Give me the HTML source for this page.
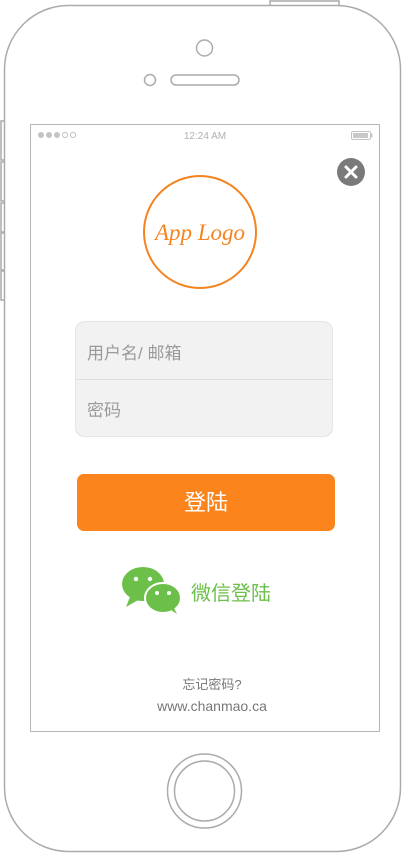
<!DOCTYPE html>
<html><head><meta charset="utf-8"><style>
html,body{margin:0;padding:0;width:405px;height:854px;background:#fff;overflow:hidden;font-family:"Liberation Sans","Noto Sans CJK SC",sans-serif}
.a{position:absolute}
</style></head><body>
<svg class="a" style="left:0;top:0" width="405" height="854">
<g fill="none" stroke="#a9acac" stroke-width="1.5">
<path d="M270 5 V1 H339 V5"/>
<rect x="4.5" y="5.5" width="396" height="846" rx="64"/>
<path d="M4.5 121 H1 V160 H4.5 M4.5 162 H1 V201 H4.5 M4.5 203 H1 V232 H4.5 M4.5 233 H1 V270 H4.5 M4.5 271 H1 V300 H4.5"/>
<circle cx="204.5" cy="48" r="8"/>
<circle cx="150" cy="80" r="5.5"/>
<rect x="171" y="75" width="68" height="10" rx="5"/>
<circle cx="204.5" cy="791" r="37"/>
<circle cx="204.5" cy="791" r="30"/>
</g>
<rect x="30.5" y="124.5" width="349" height="607" fill="none" stroke="#b5b7b7" stroke-width="1"/>
<g fill="#c4c4c4"><circle cx="41" cy="135" r="3"/><circle cx="49" cy="135" r="3"/><circle cx="57" cy="135" r="3"/></g>
<g fill="none" stroke="#c4c4c4"><circle cx="65" cy="135" r="2.6"/><circle cx="73" cy="135" r="2.6"/>
<rect x="351.5" y="131.5" width="19" height="8" rx="1.5"/></g>
<rect x="353" y="133" width="15" height="5" fill="#c8c8c8"/><rect x="371" y="133.5" width="1.5" height="4" fill="#c4c4c4"/>
<text x="205" y="139" font-size="10" fill="#b0b0b0" text-anchor="middle" font-family="Liberation Sans">12:24 AM</text>
<circle cx="351" cy="172" r="14" fill="#7a7a7a"/>
<path d="M346 167 L356 177 M356 167 L346 177" stroke="#fff" stroke-width="3" stroke-linecap="round"/>
<circle cx="200" cy="232" r="56" fill="none" stroke="#f5841f" stroke-width="2"/>
<text x="200" y="240" font-size="23" fill="#f5841f" text-anchor="middle" font-family="Liberation Serif" font-style="italic">App Logo</text>
<rect x="75.5" y="321.5" width="257" height="115" rx="9" fill="#f2f2f2" stroke="#e4e4e4"/>
<line x1="76" y1="379.5" x2="332" y2="379.5" stroke="#e0e0e0"/>
<rect x="77" y="474" width="258" height="57" rx="7" fill="#fc841c"/>
<g fill="#6cc04a">
<ellipse cx="143" cy="584" rx="21" ry="17"/><path d="M130 597 L126 607 L140 599Z"/>
<ellipse cx="163" cy="598" rx="18" ry="15" stroke="#fff" stroke-width="2"/><path d="M171 610 L177 614 L172 604Z"/>
</g>
<g fill="#fff"><circle cx="136" cy="579" r="2.2"/><circle cx="150" cy="579" r="2.2"/><circle cx="157" cy="593" r="2"/><circle cx="169" cy="593" r="2"/></g>
</svg>
<div class="a" style="left:87px;top:339px;font-size:17px;color:#9a9a9a">用户名/ 邮箱</div>
<div class="a" style="left:87px;top:396px;font-size:17px;color:#9a9a9a">密码</div>
<div class="a" style="left:77px;top:485px;width:258px;text-align:center;font-size:22px;color:#fff">登陆</div>
<div class="a" style="left:191px;top:577px;font-size:20px;color:#6cc04a">微信登陆</div>
<div class="a" style="left:0;top:674px;width:424px;text-align:center;font-size:13px;color:#777">忘记密码?</div>
<div class="a" style="left:0;top:698px;width:424px;text-align:center;font-size:14px;color:#777">www.chanmao.ca</div>
</body></html>
